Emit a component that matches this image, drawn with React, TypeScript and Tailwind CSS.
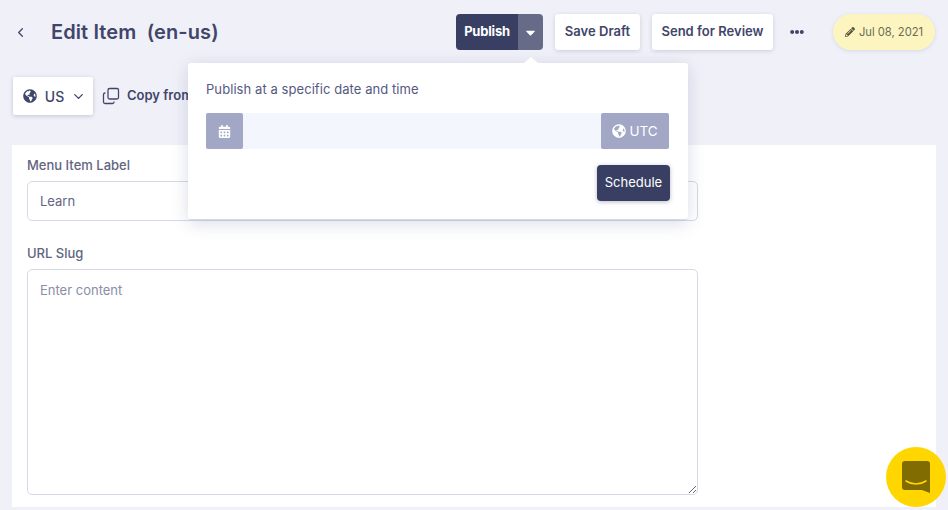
import { ChevronDown, ChevronLeft, Copy } from "lucide-react"
import { FaCalendarAlt, FaCaretDown, FaEllipsisH, FaGlobeAmericas, FaPencilAlt } from "react-icons/fa"

const font = "font-['Inter','Noto_Sans',sans-serif]"

const WhiteButton = ({ label, width }: { label: string; width: string }) => (
  <button className={`h-9 ${width} rounded-[3px] bg-white text-[13px] font-semibold tracking-[0.02px] text-[#41456a] shadow-[0_1px_4px_rgba(70,80,130,0.22)]`}>
    {label}
  </button>
)

const PublishPopover = () => (
  <div className="absolute left-[188px] top-[63px] z-10 h-[157px] w-[500px] rounded-[3px] bg-white pl-[18px] pt-[17px] shadow-[0_3px_18px_rgba(70,80,130,0.2)] border-b border-[#d6d8e6]">
    <div className="absolute -top-[6px] left-[336px] size-0 border-x-[7px] border-b-[6px] border-x-transparent border-b-white" />
    <div className="text-[13px] leading-[18px] tracking-[0.07px] text-[#55597f]">Publish at a specific date and time</div>
    <div className="mt-[15px] flex h-9 w-[463px] bg-[#f4f6fd]">
      <div className="flex w-[37px] items-center justify-center rounded-[2px] bg-[#a1a7c4] text-white">
        <FaCalendarAlt size={13} />
      </div>
      <div className="flex-1" />
      <div className="flex w-[68px] items-center justify-center gap-[3px] rounded-[2px] bg-[#a1a7c4] text-[13.5px] text-white">
        <FaGlobeAmericas size={14} />
        UTC
      </div>
    </div>
    <div className="mt-4 flex w-[464px] justify-end">
      <button className="h-9 w-[73px] rounded-[4px] bg-[#383f63] text-[13px] text-white shadow-[0_1px_4px_rgba(50,60,110,0.35)]">
        Schedule
      </button>
    </div>
  </div>
)

export default function App() {
  return (
    <div className={`relative h-[510px] w-[948px] overflow-hidden bg-[#f0f1f8] ${font}`}>
      {/* header */}
      <div className="flex h-[64px] items-start pl-[13px] pr-[13px] pt-[14px]">
        <div className="flex h-9 w-[38px] items-center">
          <ChevronLeft size={15} className="text-[#41456a]" />
        </div>
        <h1 className="flex h-9 items-center whitespace-pre text-[20px] font-semibold tracking-[0.1px] text-[#41456a]">Edit Item  (en-us)</h1>
        <div className="ml-auto flex items-center">
          <div className="flex h-9 w-[87px] overflow-hidden rounded-[4px] text-white">
            <button className="w-[62px] bg-[#383f63] text-[13px] font-bold tracking-[-0.2px]">Publish</button>
            <button className="flex flex-1 items-center justify-center bg-[#666b88]">
              <FaCaretDown size={15} />
            </button>
          </div>
          <div className="ml-3 flex gap-3">
            <WhiteButton label="Save Draft" width="w-[85px]" />
            <WhiteButton label="Send for Review" width="w-[121px]" />
          </div>
          <FaEllipsisH size={14} className="ml-[17px] text-[#41456a]" />
          <div className="ml-[29px] flex h-9 w-[102px] items-center justify-center gap-[4px] rounded-full bg-[#fdf5c0] text-[11.2px] text-[#6b6a58] shadow-[0_1px_4px_rgba(70,80,130,0.15)]">
            <FaPencilAlt size={10} className="text-[#57553f]" />
            Jul 08, 2021
          </div>
        </div>
      </div>

      {/* locale row */}
      <div className="flex items-center pl-[13px] pt-[13px]">
        <button className="flex h-[38px] w-20 items-center justify-center gap-[8px] rounded-[2px] bg-white pl-[3px] text-[14px] font-medium text-[#41456a] shadow-[0_1px_4px_rgba(70,80,130,0.28)]">
          <FaGlobeAmericas size={14} />
          US
          <ChevronDown size={15} strokeWidth={2.2} className="-ml-[1px]" />
        </button>
        <Copy size={18} strokeWidth={1.7} className="ml-[9px] -scale-y-100 text-[#41456a]" />
        <span className="ml-[7px] text-[13px] font-semibold text-[#41456a]">Copy from</span>
      </div>

      {/* form card */}
      <div className="ml-3 mt-[30px] h-[362px] w-[924px] bg-white px-[15px] pt-[11px]">
        <label className="block text-[13px] font-medium leading-[18px] text-[#62657f]">Menu Item Label</label>
        <input
          readOnly
          value="Learn"
          className="mt-[7px] block h-10 w-[671px] rounded-[5px] border border-[#d6d8e6] px-3 text-[13px] text-[#62657f] outline-none"
        />
        <label className="mt-[23px] block text-[13px] font-medium leading-[18px] text-[#62657f]">URL Slug</label>
        <textarea
          readOnly
          placeholder="Enter content"
          className="mt-[7px] block h-[226px] w-[671px] rounded-[5px] border border-[#d6d8e6] px-3 py-[11px] text-[13px] leading-[18px] outline-none placeholder:text-[#8a8da6]"
        />
      </div>

      <PublishPopover />

      {/* chat launcher */}
      <div className="absolute left-[886px] top-[447px] z-20 flex size-[60px] items-center justify-center rounded-full bg-[#ffd600]">
        <svg width="28" height="32" viewBox="0 0 28 32">
          <path d="M3 0h22a3 3 0 0 1 3 3v29l-8-3H3a3 3 0 0 1-3-3V3a3 3 0 0 1 3-3z" fill="#806c00" />
          <path d="M4 20c6 4 14 4 20 0" fill="none" stroke="#ffd600" strokeWidth="1.6" strokeLinecap="round" />
        </svg>
      </div>
    </div>
  )
}
